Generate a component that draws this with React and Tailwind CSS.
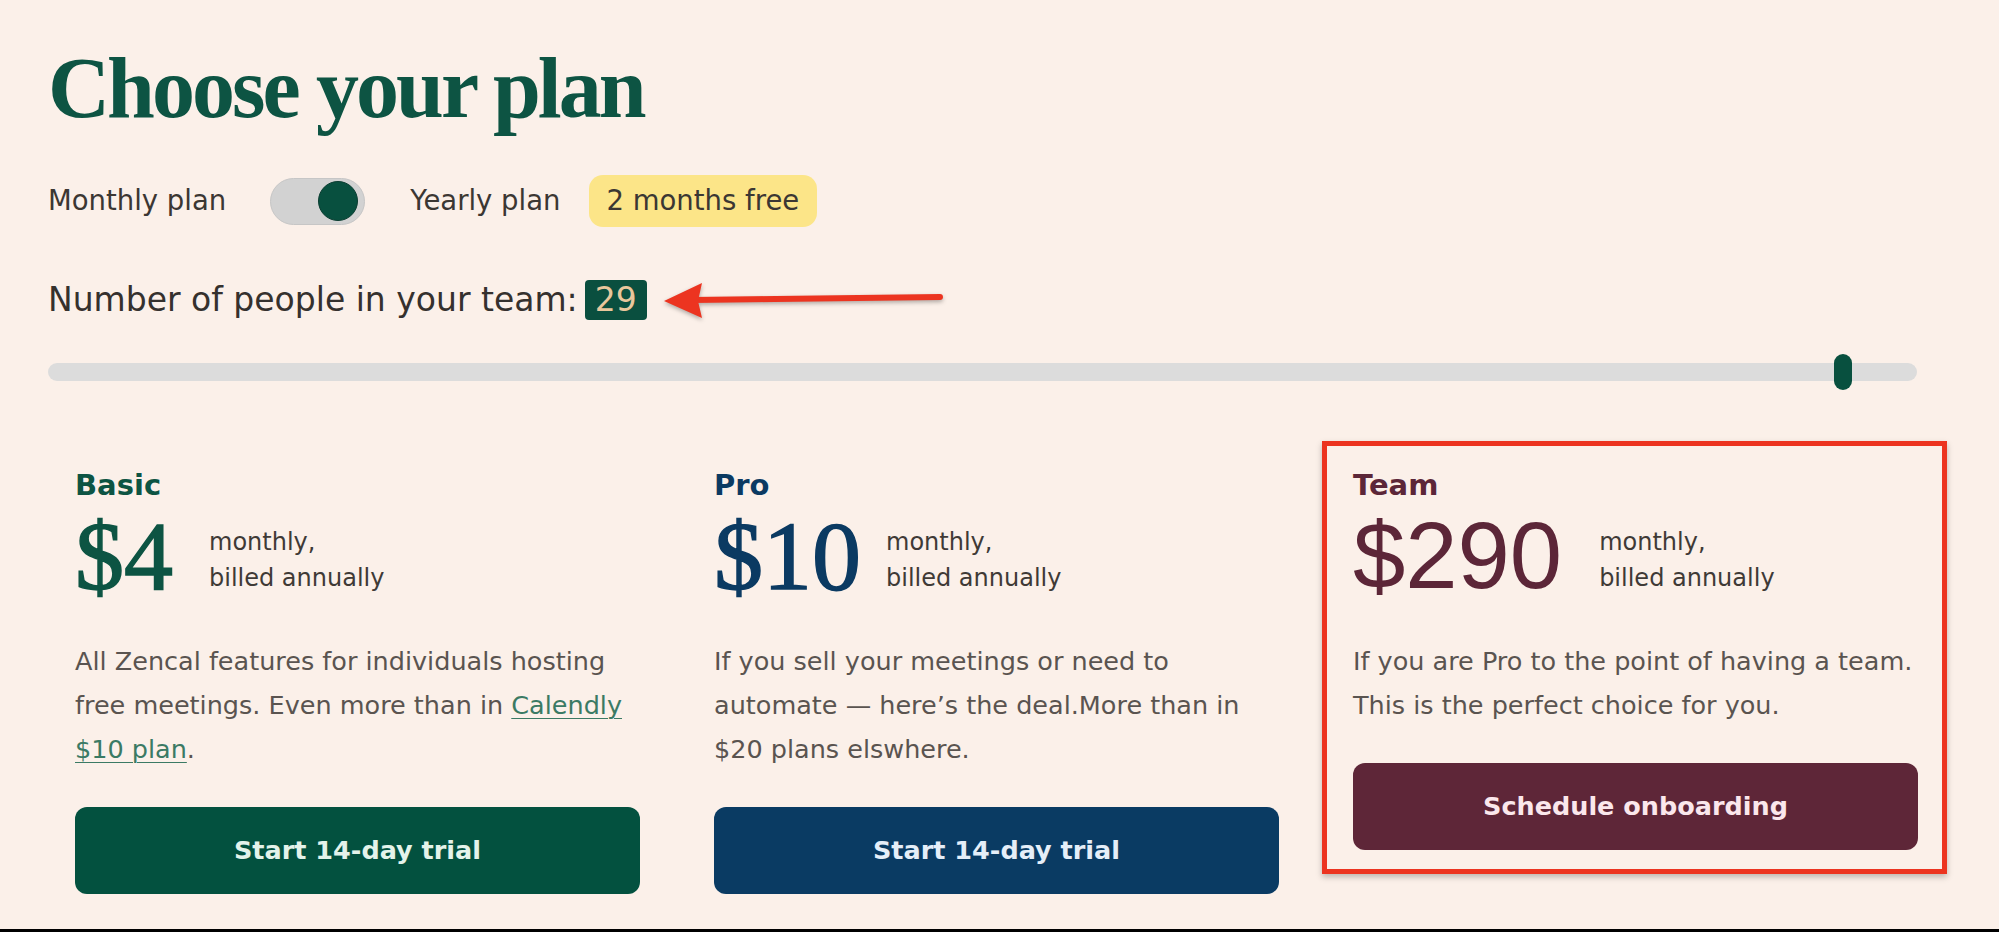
import React from "react";

const plans = [
	{
		name: "Basic",
		price: "$4",
		title: "text-[#0d5443]",
		priceFont: "font-['Liberation_Serif',serif] text-[98px] leading-[94px] [-webkit-text-stroke:1.5px_#0d5443]",
		subGap: "ml-[36px]",
		button: "bg-[#03513f] text-[#e4f3ea]",
		cta: "Start 14-day trial",
		lines: [
			"All Zencal features for individuals hosting",
			<>free meetings. Even more than in <a href="#" className="underline underline-offset-4 decoration-1 text-[#3b7a64]">Calendly</a></>,
			<><a href="#" className="underline underline-offset-4 decoration-1 text-[#3b7a64]">$10 plan</a>.</>,
		],
	},
	{
		name: "Pro",
		price: "$10",
		title: "text-[#0b3a62]",
		priceFont: "font-['Liberation_Serif',serif] text-[98px] leading-[94px] [-webkit-text-stroke:1.5px_#0b3a62]",
		subGap: "ml-[25px]",
		button: "bg-[#0a3b63] text-[#e5eef8]",
		cta: "Start 14-day trial",
		lines: [
			"If you sell your meetings or need to",
			"automate — here’s the deal.More than in",
			"$20 plans elswhere.",
		],
	},
	{
		name: "Team",
		price: "$290",
		title: "text-[#5c2638]",
		priceFont: "font-['Liberation_Sans',sans-serif] text-[94px] leading-none",
		subGap: "ml-[37px]",
		button: "bg-[#5e2638] text-[#fbe7ec]",
		cta: "Schedule onboarding",
		highlight: true,
		lines: [
			"If you are Pro to the point of having a team.",
			"This is the perfect choice for you.",
		],
	},
];

function PlanCard({ plan }) {
	return (
		<div className={"border-[5px] pt-[22px] pb-[19px] pl-[26px] pr-[24px] " + (plan.highlight ? "border-[#ec3420] shadow-[0_3px_6px_rgba(0,0,0,0.25)]" : "border-transparent")}>
			<h2 className={"text-[29px] leading-[34px] font-bold " + plan.title}>{plan.name}</h2>
			<div className="mt-[7px] h-[94px] flex items-start">
				<span className={plan.title + " " + plan.priceFont}>{plan.price}</span>
				<div className={"mt-[15px] text-[24px] leading-[36px] text-[#3f3a36] " + plan.subGap}>
					<p>monthly,</p>
					<p>billed annually</p>
				</div>
			</div>
			<div className="mt-[36px] text-[25.5px] leading-[44px] text-[#5a5450]">
				{plan.lines.map((l, i) => (
					<p key={i} className="whitespace-nowrap">{l}</p>
				))}
			</div>
			<button className={"mt-[36px] w-full h-[87px] rounded-[12px] text-[25.5px] font-bold " + plan.button}>{plan.cta}</button>
		</div>
	);
}

export default function App() {
	return (
		<div className="min-h-screen flex flex-col bg-[#fbf0e9] font-['DejaVu_Sans',sans-serif]">
			<div className="flex-1 pl-[48px]">
				<h1 className="mt-[45px] font-['Liberation_Serif',serif] font-bold text-[86px] leading-none tracking-[-3px] text-[#0d5443]">Choose your plan</h1>

				<div className="mt-[44px] h-[52px] flex items-center text-[27.5px] text-[#3b3733]">
					<span>Monthly plan</span>
					<div className="ml-[44px] w-[95px] h-[47px] rounded-full bg-[#d2d2d2] border border-[#c6c6c6] flex items-center justify-end pr-[6px]">
						<div className="w-[40px] h-[40px] rounded-full bg-[#08503f] border border-[#0a3d31]" />
					</div>
					<span className="ml-[45px]">Yearly plan</span>
					<span className="ml-[28px] h-[52px] px-[18px] flex items-center rounded-[14px] bg-[#fce588] text-[#3b3733]">2 months free</span>
				</div>

				<div className="mt-[53px] h-[40px] flex items-center text-[33px] text-[#35312e]">
					<span>Number of people in your team:</span>
					<span className="ml-[7px] h-[40px] px-[10px] flex items-center rounded-[4px] bg-[#0a4f3f] text-[#e9c79c]">29</span>
					<svg width="282" height="44" viewBox="0 0 282 44" className="ml-[15px] drop-shadow-[0_2px_2px_rgba(0,0,0,0.3)]">
						<line x1="30" y1="22" x2="278" y2="19" stroke="#ec3420" strokeWidth="6" strokeLinecap="round" />
						<polygon points="2,23 40,5 36,23 40,40" fill="#ec3420" />
					</svg>
				</div>

				<div className="mt-[34px] relative h-[36px] w-[1869px] flex items-center">
					<div className="w-full h-[18px] rounded-full bg-[#dcdcdc]" />
					<div className="absolute left-[1786px] top-0 w-[18px] h-[36px] rounded-full bg-[#08503f]" />
				</div>

				<div className="mt-[51px] -ml-[4px] grid grid-cols-[625px_625px_625px] gap-x-[14px] items-start">
					{plans.map((p) => (
						<PlanCard key={p.name} plan={p} />
					))}
				</div>
			</div>
			<div className="h-[3px] bg-black" />
		</div>
	);
}
